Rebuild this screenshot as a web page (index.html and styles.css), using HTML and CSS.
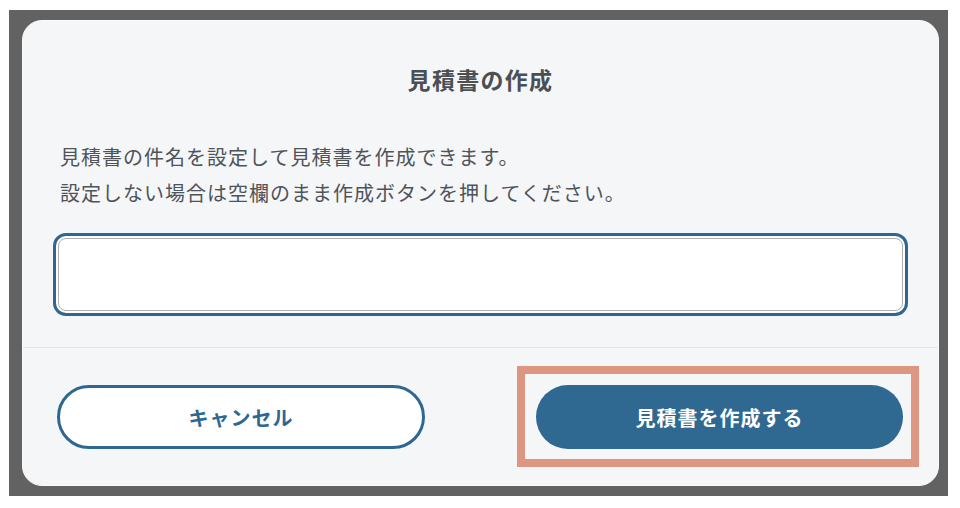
FILE: index.html
```html
<!DOCTYPE html>
<html lang="ja">
<head>
<meta charset="utf-8">
<title>見積書の作成</title>
<link rel="stylesheet" href="styles.css">
</head>
<body>
<div class="backdrop">
  <div class="dialog">
    <div class="dialog-body">
      <h1 class="dialog-title">見積書の作成</h1>
      <p class="dialog-text">見積書の件名を設定して見積書を作成できます。<br>設定しない場合は空欄のまま作成ボタンを押してください。</p>
      <input class="subject-input" type="text" aria-label="見積書の件名">
    </div>
    <div class="dialog-footer">
      <button class="btn btn-outline" type="button">キャンセル</button>
      <div class="highlight-wrap">
        <button class="btn btn-primary" type="button">見積書を作成する</button>
        <span class="highlight-box"></span>
      </div>
    </div>
  </div>
</div>
</body>
</html>
```
FILE: styles.css
```css
* { box-sizing: border-box; }

html, body {
  margin: 0;
  padding: 0;
  background: #ffffff;
}

body {
  font-family: "Noto Sans CJK JP", "Noto Sans", sans-serif;
  color: #4d5257;
}

.backdrop {
  margin: 10px 0 0 9px;
  width: 939px;
  height: 486px;
  background: #626262;
  padding: 10px 9px 10px 13px;
}

.dialog {
  width: 917px;
  height: 466px;
  background: #f5f6f8;
  border: 1px solid #fbfbfc;
  border-radius: 20px;
  display: flex;
  flex-direction: column;
}

.dialog-body {
  padding: 42px 35px 0 35px;
  display: flex;
  flex-direction: column;
}

.dialog-title {
  margin: 0;
  font-size: 23px;
  line-height: 32px;
  font-weight: 700;
  text-align: center;
  letter-spacing: 1.3px;
  color: #4a4f54;
}

.dialog-text {
  margin: 44px 0 0 2px;
  font-size: 20px;
  line-height: 35.5px;
  letter-spacing: 1px;
  color: #4f5458;
}

.subject-input {
  margin-top: 28px;
  width: 845px;
  height: 73px;
  border: 1px solid #b0b0b0;
  border-radius: 8px;
  background: #ffffff;
  outline: 3px solid #2e6791;
  outline-offset: 2px;
  box-shadow: 0 0 0 2px #ffffff;
  font-family: inherit;
  font-size: 20px;
  padding: 0 14px;
}

.dialog-footer {
  margin-top: 36px;
  border-top: 1px solid #e4e6e9;
  padding: 37px 35px 0 34px;
  display: flex;
  justify-content: space-between;
  align-items: center;
}

.btn {
  height: 64px;
  border-radius: 32px;
  font-family: inherit;
  font-size: 20px;
  font-weight: 700;
  letter-spacing: 1px;
  cursor: pointer;
}

.btn-outline {
  width: 368px;
  background: #ffffff;
  border: 3px solid #2e6791;
  color: #2e6791;
}

.btn-primary {
  width: 367px;
  background: #2f6890;
  border: none;
  color: #ffffff;
}

.highlight-wrap {
  position: relative;
  display: flex;
}

.highlight-box {
  position: absolute;
  left: -19px;
  top: -19px;
  right: -16px;
  bottom: -18px;
  border: 8px solid #dd9682;
  pointer-events: none;
}
```
